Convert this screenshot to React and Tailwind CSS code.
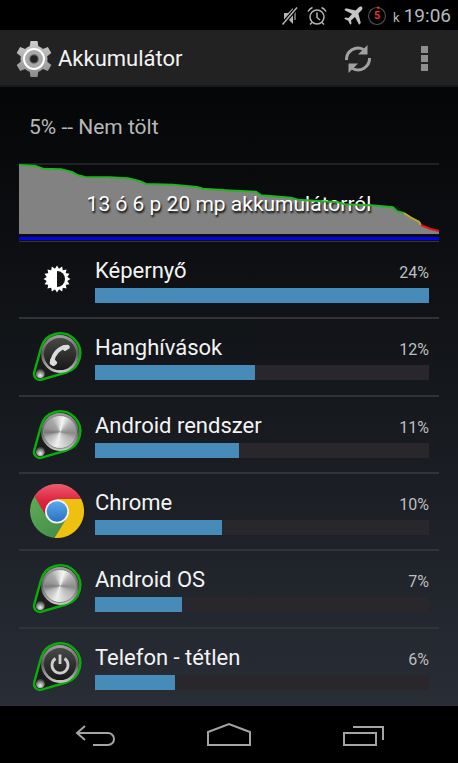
import React from 'react';

const usage = [
  { name: 'Képernyő', percent: 24, icon: 'screen' },
  { name: 'Hanghívások', percent: 12, icon: 'phone' },
  { name: 'Android rendszer', percent: 11, icon: 'metal' },
  { name: 'Chrome', percent: 10, icon: 'chrome' },
  { name: 'Android OS', percent: 7, icon: 'metal' },
  { name: 'Telefon - tétlen', percent: 6, icon: 'power' },
];

const barWidths = [100, 48, 43, 38, 26, 24];

/* ---------- Status bar ---------- */

const MutedIcon = () => (
  <svg width="18" height="20" viewBox="0 0 18 20" aria-hidden="true">
    <path d="M3 7h4l5-5v16l-5-5H3z" fill="#b4b4b4" />
    <path d="M14 6v8" stroke="#8a8a8a" strokeWidth="1.5" />
    <path d="M1.5 18.5L16 1.5" stroke="#000" strokeWidth="4" />
    <path d="M1.5 18.5L16 1.5" stroke="#b4b4b4" strokeWidth="1.5" />
  </svg>
);

const AlarmIcon = () => (
  <svg width="20" height="20" viewBox="0 0 20 20" fill="none" stroke="#b4b4b4" strokeWidth="1.5" aria-hidden="true">
    <circle cx="10" cy="11" r="7" />
    <path d="M10 6.500v5l3 2.500M1 5.500a9 9 0 0 1 4.500-4M19 5.500a9 9 0 0 0-4.500-4M5 16.500l-2 2M15 16.500l2 2" />
  </svg>
);

const PlaneIcon = () => (
  <svg width="20" height="20" viewBox="0 0 20 20" fill="#c4c4c4" aria-hidden="true">
    <path d="M19 1c-1-1-2.600-.3-3.600.7L12.500 4.600 3 2.200 1.300 3.900 9 8 5.500 12l-3-.5L1.200 12.800l4 2 2 4 1.300-1.300-.5-3L12 11l4.100 7.700 1.700-1.700-2.400-9.500 2.900-2.900C19.300 3.600 20 2 19 1z" />
  </svg>
);

const BatteryRing = () => (
  <span className="grid h-5 w-5 place-items-center">
    <svg width="20" height="20" viewBox="0 0 20 20" fill="none" className="col-start-1 row-start-1" aria-hidden="true">
      <circle cx="10" cy="10" r="8.500" stroke="#4c4c4c" strokeWidth="1.200" />
      <path d="M10 1.500a8.500 8.500 0 0 1 2.500.4" stroke="#ee3030" strokeWidth="2" />
    </svg>
    <span className="col-start-1 row-start-1 text-[11px] leading-5 font-bold text-[#e23434]">5</span>
  </span>
);

const StatusBar = () => (
  <div className="flex h-[30px] items-center justify-end bg-black pt-0.5 pr-[7px] text-[#b8b8b8]">
    <MutedIcon />
    <span className="w-2" />
    <AlarmIcon />
    <span className="w-4" />
    <PlaneIcon />
    <span className="w-1" />
    <BatteryRing />
    <span className="ml-1.5 flex items-baseline gap-1">
      <span className="text-[13px]">k</span>
      <time className="text-[19px] leading-7">19:06</time>
    </span>
  </div>
);

/* ---------- Action bar ---------- */

const gearTeeth = [0, 60, 120, 180, 240, 300];

const GearIcon = () => (
  <svg width="36" height="38" viewBox="0 0 36 38" aria-hidden="true">
    <defs>
      <linearGradient id="gear" gradientUnits="userSpaceOnUse" x1="0" y1="0" x2="0" y2="38">
        <stop offset="0" stopColor="#cfcfcf" />
        <stop offset="1" stopColor="#8a8a8a" />
      </linearGradient>
      <mask id="gearMask">
        <g fill="#fff">
          {gearTeeth.map((angle) => (
            <path key={angle} d="M14.500 1h7l1.200 8h-9.400z" transform={`rotate(${angle} 18 19)`} />
          ))}
          <circle cx="18" cy="19" r="13.500" />
        </g>
      </mask>
    </defs>
    <rect width="36" height="38" fill="url(#gear)" mask="url(#gearMask)" />
    <circle cx="18" cy="19" r="10" fill="#a8a8a8" stroke="#fff" strokeWidth="2" />
    <circle cx="18" cy="19" r="5" fill="#777" />
    <circle cx="18" cy="19" r="3.800" fill="#232323" />
  </svg>
);

const RefreshIcon = () => (
  <svg width="28" height="28" viewBox="0 0 28 28" aria-hidden="true">
    <path d="M2.500 15A11.500 11.500 0 0 1 19.500 4.500M25.500 13A11.500 11.500 0 0 1 8.500 23.500" fill="none" stroke="#a2a2a2" strokeWidth="3" />
    <path d="M23.500 0v9.500H14zM4.500 28v-9.500H14z" fill="#a2a2a2" />
  </svg>
);

const ActionBar = () => (
  <header className="flex h-[57px] items-center border-b-2 border-[#191919] bg-[#222222] pt-0.5 pl-4">
    <GearIcon />
    <h1 className="ml-1.5 flex-1 text-[22px] leading-7 text-[#f3f3f3]">Akkumulátor</h1>
    <button type="button" aria-label="Frissítés" className="grid h-12 w-16 place-items-center">
      <RefreshIcon />
    </button>
    <button type="button" aria-label="További lehetőségek" className="grid h-12 w-[68px] place-items-center">
      <span className="grid gap-0.5">
        <span className="h-[7px] w-[7px] bg-[#8e8e8e]" />
        <span className="h-[7px] w-[7px] bg-[#8e8e8e]" />
        <span className="h-[7px] w-[7px] bg-[#8e8e8e]" />
      </span>
    </button>
  </header>
);

/* ---------- Battery history ---------- */

const greenLine =
  '0,2 16,2.700 24,5.700 42,6.300 53,9 59,12.300 66,14 91,14.300 109,15.300 121,18.300 127,21 154,21.700 178,24 184,25.700 211,27.500 237,28.700 242,32.300 272,34.700 279,36.700 319,39.300 326,41.300 352,42.300 374,44.300 378,48.300 385,50';
const yellowLine = '385,50 392,54.700 400,58.700 402,62';
const redLine = '402,62 411,65.700 420,68';

const HistoryChart = () => (
  <section className="border-b border-[#34362f] pb-px">
    <div className="grid border-t-2 border-[#1f2122] pb-[3px]">
      <svg viewBox="0 2 420 69" preserveAspectRatio="none" className="col-start-1 row-start-1 h-[69px] w-full" aria-hidden="true">
        <polygon points={`0,71 ${greenLine} ${yellowLine} ${redLine} 420,71`} fill="#828282" />
      </svg>
      <p className="col-start-1 row-start-1 self-center pt-2 text-center text-[21px] leading-7 text-white [text-shadow:1px_2px_2px_#000]">
        13 ó 6 p 20 mp akkumulátorról
      </p>
      <svg viewBox="0 2 420 69" preserveAspectRatio="none" className="z-10 col-start-1 row-start-1 h-[69px] w-full overflow-visible" fill="none" strokeWidth="2" aria-hidden="true">
        <polyline points={greenLine} stroke="#22b422" />
        <polyline points={yellowLine} stroke="#b8ac2c" />
        <polyline points={redLine} stroke="#e81414" />
      </svg>
    </div>
    <div className="h-[3px] bg-[#0000f4]" />
  </section>
);

/* ---------- App icons, all on a 54px box ---------- */

const sunRays = Array.from({ length: 16 }, (_, i) => i * 22.5);

const ScreenIcon = () => (
  <svg width="54" height="54" viewBox="0 0 54 54" aria-hidden="true">
    <g fill="#fff">
      {sunRays.map((angle) => (
        <path key={angle} d="M24.500 17.500L27 13.500l2.500 4z" transform={`rotate(${angle} 27 27)`} />
      ))}
      <circle cx="27" cy="27" r="10.500" />
    </g>
    <path d="M27 19a8 8 0 0 1 0 16z" fill="#121416" />
  </svg>
);

const ChromeIcon = () => (
  <svg width="54" height="54" viewBox="0 0 54 54" aria-hidden="true">
    <defs>
      <linearGradient id="chromeRed" x1="0" y1="0" x2="0" y2="1">
        <stop offset="0" stopColor="#ef5a70" />
        <stop offset="0.5" stopColor="#dc2640" />
        <stop offset="1" stopColor="#d0142c" />
      </linearGradient>
      <linearGradient id="chromeBlue" x1="0" y1="0" x2="0" y2="1">
        <stop offset="0" stopColor="#5aa9ea" />
        <stop offset="1" stopColor="#2a72c4" />
      </linearGradient>
      <linearGradient id="chromeGreen" x1="0" y1="0" x2="1" y2="1">
        <stop offset="0" stopColor="#62b25c" />
        <stop offset="1" stopColor="#3a8240" />
      </linearGradient>
    </defs>
    <circle cx="27" cy="27" r="27" fill="url(#chromeGreen)" />
    <path d="M27 15h24.200A27 27 0 0 1 24.500 53.900L37.400 33z" fill="#f0c010" />
    <path d="M4.400 12.300A27 27 0 0 1 51.200 15H27L16.600 33z" fill="url(#chromeRed)" />
    <circle cx="27" cy="27.500" r="12" fill="#f4f4f4" />
    <circle cx="27" cy="27.500" r="10.300" fill="url(#chromeBlue)" />
  </svg>
);

// Teardrop badge with a green rim, shared by the three themed icons
const PinIcon = ({ children, metal }) => (
  <span className="relative block h-[54px] w-[54px]">
    <svg width="54" height="54" viewBox="0 0 54 54" aria-hidden="true">
      <defs>
        <linearGradient id="rim" x1="0" y1="0" x2="0" y2="1">
          <stop offset="0" stopColor="#9a9a9a" />
          <stop offset="0.5" stopColor="#5c5c5c" />
          <stop offset="1" stopColor="#c4c4c4" />
        </linearGradient>
        <linearGradient id="face" x1="0" y1="0" x2="0" y2="1">
          <stop offset="0" stopColor="#4a4a4a" />
          <stop offset="1" stopColor="#161616" />
        </linearGradient>
        <radialGradient id="screw" cx="0.5" cy="0.7" r="0.6">
          <stop offset="0" stopColor="#f4f4f4" />
          <stop offset="1" stopColor="#4e4e4e" />
        </radialGradient>
      </defs>
      <path d="M11 19A20 20 0 1 1 36 43.500L11.700 50.700A6 6 0 0 1 4.200 43.400z" fill="#1c1c1c" stroke="#0aae0a" strokeWidth="2.400" />
      <circle cx="10.300" cy="44.700" r="4.500" fill="url(#screw)" />
      <circle cx="30" cy="25" r="17.500" fill="url(#face)" stroke="url(#rim)" strokeWidth="2.800" />
      {children}
    </svg>
    {metal && (
      <span className="absolute top-2 left-[13px] h-[34px] w-[34px] rounded-full border border-[#8c8c8c] bg-[conic-gradient(#e4e4e4,#f4f4f4_15deg,#b8b8b8_45deg,#a0a0a0_70deg,#8a8a8a_95deg,#b4b4b4_120deg,#d0d0d0_160deg,#f0f0f0_195deg,#c8c8c8_225deg,#b4b4b4_245deg,#7a7a7a_268deg,#989898_290deg,#a8a8a8_325deg,#e4e4e4)]" />
    )}
  </span>
);

const AppIcon = ({ type }) => {
  if (type === 'screen') return <ScreenIcon />;
  if (type === 'chrome') return <ChromeIcon />;
  if (type === 'metal') return <PinIcon metal />;
  if (type === 'phone') {
    return (
      <PinIcon>
        <path d="M36 18C29.500 18.500 23.500 24.500 22.500 32" fill="none" stroke="#dcdcdc" strokeWidth="4" />
        <path
          d="M32.500 16.200l5-.4c1.300 0 2.200 1.200 2.300 2.400 0 .8-.5 1.400-1.200 1.800l-3 1.800c-.9.500-1.700.1-2.200-.7zM20.300 29.800l4.200.4 2.300 2.600c.6.700.5 1.500-.1 2.100l-1.800 1.700c-.7.700-1.700.7-2.500.2l-2-1.300c-.6-.4-.8-1-.7-1.800z"
          fill="#dcdcdc"
        />
      </PinIcon>
    );
  }
  return (
    <PinIcon>
      <path d="M25.500 19.500a8 8 0 1 0 9 0M30 15.500v9.500" fill="none" stroke="#cfcfcf" strokeWidth="2.800" />
    </PinIcon>
  );
};

/* ---------- Usage list ---------- */

const UsageRow = ({ item, width }) => (
  <li className="flex flex-1 items-start gap-[11px] border-b-2 border-[#303338] px-[10px] pb-2.5 last:border-transparent">
    <span className="mt-2.5 shrink-0 pl-px">
      <AppIcon type={item.icon} />
    </span>
    <div className="flex-1 pt-3.5">
      <div className="flex h-7 items-baseline justify-between">
        <span className="text-[22px] leading-[30px] text-[#f3f3f3]">{item.name}</span>
        <span className="text-base leading-5 text-[#bebebe]">{item.percent}%</span>
      </div>
      <div className="mt-1 h-[15px] bg-[#29262c]">
        <div className="h-full bg-[#478bb9]" style={{ width: `${width}%` }} />
      </div>
    </div>
  </li>
);

/* ---------- Navigation bar ---------- */

const NavBar = () => (
  <nav className="flex h-[57px] items-center justify-between bg-black px-[73px]">
    <button type="button" aria-label="Vissza">
      <svg width="44" height="26" viewBox="0 0 44 26" fill="none" stroke="#a4a4a4" strokeWidth="2" aria-hidden="true">
        <path d="M12 4L4 11l8 7M4 11h31a5.800 5.800 0 0 1 0 12H20" />
      </svg>
    </button>
    <button type="button" aria-label="Kezdőképernyő">
      <svg width="44" height="26" viewBox="0 0 44 26" fill="none" stroke="#a4a4a4" strokeWidth="2" aria-hidden="true">
        <path d="M1 23V10l21-8 21 8v13z" />
      </svg>
    </button>
    <button type="button" aria-label="Legutóbbi alkalmazások">
      <svg width="44" height="26" viewBox="0 0 44 26" fill="none" stroke="#a4a4a4" strokeWidth="2" aria-hidden="true">
        <path d="M3 11h32v12H3zM12 5h30v13" />
      </svg>
    </button>
  </nav>
);

const App = () => {
  return (
    <div className="flex min-h-screen flex-col bg-black font-['Roboto',sans-serif]">
      <StatusBar />
      <ActionBar />
      <main className="flex flex-1 flex-col bg-linear-to-b from-[#050607] to-[#292d36] px-[19px]">
        <h2 className="px-2.5 pt-[26px] pb-[22px] text-[21px] leading-7 text-[#b8b8b8]">5% -- Nem tölt</h2>
        <HistoryChart />
        <ul className="flex flex-1 flex-col">
          {usage.map((item, i) => (
            <UsageRow key={item.name} item={item} width={barWidths[i]} />
          ))}
        </ul>
      </main>
      <NavBar />
    </div>
  );
};

export default App;
